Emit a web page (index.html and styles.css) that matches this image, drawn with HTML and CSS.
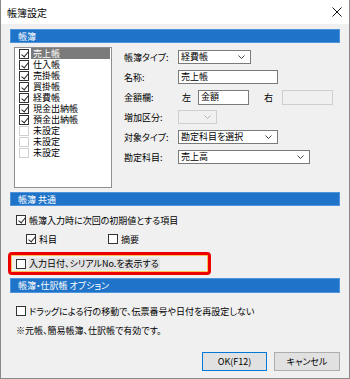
FILE: index.html
```html
<!DOCTYPE html>
<html>
<head>
<meta charset="UTF-8">
<title>帳簿設定</title>
<link rel="stylesheet" href="styles.css">
</head>
<body>
<div class="win">
	<div class="titlebar">
		<span class="title">帳簿設定</span>
		<svg class="close" width="10" height="10" viewBox="0 0 10 10"><path d="M0.5 0.5L9.5 9.5M9.5 0.5L0.5 9.5" stroke="#111" stroke-width="1" fill="none"/></svg>
	</div>
	<div class="main">
		<div class="head">帳簿</div>
		<div class="sec1">
			<div class="list">
				<div class="item"><span class="cb on"></span><span class="name sel">売上帳</span></div>
				<div class="item"><span class="cb on"></span><span class="name">仕入帳</span></div>
				<div class="item"><span class="cb on"></span><span class="name">売掛帳</span></div>
				<div class="item"><span class="cb on"></span><span class="name">買掛帳</span></div>
				<div class="item"><span class="cb on"></span><span class="name">経費帳</span></div>
				<div class="item"><span class="cb on"></span><span class="name">現金出納帳</span></div>
				<div class="item"><span class="cb on"></span><span class="name">預金出納帳</span></div>
				<div class="item"><span class="cb off"></span><span class="name">未設定</span></div>
				<div class="item"><span class="cb off"></span><span class="name">未設定</span></div>
				<div class="item"><span class="cb off"></span><span class="name">未設定</span></div>
			</div>
			<div class="form">
				<div class="row"><span class="lbl">帳簿タイプ:</span><div class="sel-box w73"><span>経費帳</span><svg width="7" height="4" viewBox="0 0 7 4"><path d="M0.5 0.5L3.5 3.5L6.5 0.5" stroke="#444" fill="none"/></svg></div></div>
				<div class="row"><span class="lbl">名称:</span><div class="inp w100">売上帳</div></div>
				<div class="row"><span class="lbl">金額欄:</span><span class="side">左</span><div class="inp w51 tall">金額</div><span class="side right">右</span><div class="inp w51 tall dis"></div></div>
				<div class="row"><span class="lbl">増加区分:</span><div class="sel-box w39 dis"><span></span><svg width="7" height="4" viewBox="0 0 7 4"><path d="M0.5 0.5L3.5 3.5L6.5 0.5" stroke="#b5b5b5" fill="none"/></svg></div></div>
				<div class="row"><span class="lbl">対象タイプ:</span><div class="sel-box w100"><span>勘定科目を選択</span><svg width="7" height="4" viewBox="0 0 7 4"><path d="M0.5 0.5L3.5 3.5L6.5 0.5" stroke="#444" fill="none"/></svg></div></div>
				<div class="row"><span class="lbl">勘定科目:</span><div class="sel-box w132"><span>売上高</span><svg width="7" height="4" viewBox="0 0 7 4"><path d="M0.5 0.5L3.5 3.5L6.5 0.5" stroke="#444" fill="none"/></svg></div></div>
			</div>
		</div>
		<div class="head">帳簿 共通</div>
		<div class="sec2">
			<div class="check top"><span class="cb on"></span><span>帳簿入力時に次回の初期値とする項目</span></div>
			<div class="subrow">
				<div class="check"><span class="cb on"></span><span>科目</span></div>
				<div class="check tekiyo"><span class="cb"></span><span>摘要</span></div>
			</div>
			<div class="mark">
				<div class="check"><span class="cb"></span><span class="focus">入力日付、シリアルNo.を表示する</span></div>
			</div>
		</div>
		<div class="head third">帳簿・仕訳帳 オプション</div>
		<div class="sec3">
			<div class="check top"><span class="cb"></span><span>ドラッグによる行の移動で、伝票番号や日付を再設定しない</span></div>
			<div class="note">※元帳、簡易帳簿、仕訳帳で有効です。</div>
		</div>
		<div class="buttons">
			<div class="btn def">OK(F12)</div>
			<div class="btn">キャンセル</div>
		</div>
	</div>
</div>
</body>
</html>
```

FILE: styles.css
```css
*{
	margin:0;
	padding:0;
	box-sizing:border-box;
}
body{
	font-family:"Noto Sans CJK JP","Noto Sans",sans-serif;
	font-size:9px;
	color:#000;
	background:#fff;
	font-feature-settings:"palt";
}
.win{
	width:350px;
	height:379px;
	border:1px solid #8a8a8a;
	border-top:none;
	background:#f0f0f0;
	display:flex;
	flex-direction:column;
}
.titlebar{
	height:24px;
	background:#fff;
	display:flex;
	align-items:center;
	justify-content:space-between;
	padding:0 6px 0 6px;
	font-size:10px;
}
.title{
	font-feature-settings:normal;
}
.close{
	margin-right:1px;
}
.main{
	padding:5px 9px 0 9px;
	display:flex;
	flex-direction:column;
}
.head{
	height:14px;
	line-height:14px;
	background:#1f74c9;
	border:1px solid #4f95dc;
	color:#fff;
	padding-left:7px;
}
.third{
	margin-top:3px;
	height:15px;
}
.sec1{
	display:flex;
	align-items:flex-start;
	padding:4px 0 4px 4px;
}
.list{
	width:98px;
	height:141px;
	background:#fff;
	border:1px solid #8f8f8f;
	padding:0 1px 0 4px;
	font-feature-settings:normal;
}
.item{
	height:11px;
	display:flex;
	align-items:center;
}
.item .cb{
	margin-right:2px;
}
.name{
	flex:1;
	height:11px;
	line-height:11px;
	padding-left:2px;
}
.sel{
	background:#7b7b7b;
	color:#fff;
}
.cb{
	display:inline-block;
	width:10px;
	height:10px;
	border:1px solid #333;
	background:#fff;
	position:relative;
	flex:none;
}
.cb.on::after{
	content:"";
	position:absolute;
	left:2.5px;
	top:0px;
	width:3px;
	height:6px;
	border:solid #222;
	border-width:0 1px 1px 0;
	transform:rotate(40deg);
}
.cb.off{
	border-color:#d0d0d0;
}
.form{
	margin-left:12px;
	display:flex;
	flex-direction:column;
}
.row{
	height:20px;
	display:flex;
	align-items:center;
}
.lbl{
	width:54px;
}
.sel-box,.inp{
	height:14px;
	background:#fff;
	border:1px solid #7a7a7a;
	display:flex;
	align-items:center;
	padding-left:2px;
	line-height:12px;
}
.sel-box{
	justify-content:space-between;
	padding-right:5px;
}
.tall{
	height:15px;
}
.dis{
	border-color:#cfcfcf;
	background:#f0f0f0;
}
.w39{width:39px;}
.w51{width:51px;}
.w73{width:73px;}
.w100{width:100px;}
.w132{width:132px;}
.side{
	margin-left:4px;
	margin-right:7px;
}
.side.right{
	margin-left:15px;
	margin-right:9px;
}
.sec2{
	padding-top:6px;
	display:flex;
	flex-direction:column;
}
.check{
	display:flex;
	align-items:center;
	height:16px;
}
.check .cb{
	margin-right:3px;
}
.top{
	padding-left:6px;
}
.subrow{
	height:22px;
	display:flex;
	align-items:center;
	padding-left:16px;
}
.tekiyo{
	margin-left:51px;
}
.mark{
	margin:2px 0 0 -2px;
	width:203px;
	height:23px;
	border:3px solid #ee0000;
	border-radius:4px;
	padding:0 0 0 5px;
	display:flex;
	align-items:center;
	box-shadow:inset 0 0 0 1px #f6c35a;
}
.focus{
	background:#e2e2e2;
	height:12px;
	line-height:12px;
	padding-right:1px;
}
.sec3{
	padding-top:10px;
	display:flex;
	flex-direction:column;
}
.note{
	margin-top:4px;
	height:16px;
	line-height:16px;
	padding-left:6px;
}
.buttons{
	margin-top:13px;
	display:flex;
	justify-content:flex-end;
	gap:7px;
}
.btn{
	width:66px;
	height:19px;
	background:#e1e1e1;
	border:1px solid #adadad;
	text-align:center;
	line-height:17px;
}
.btn.def{
	width:65px;
	border-color:#0078d7;
}
```
